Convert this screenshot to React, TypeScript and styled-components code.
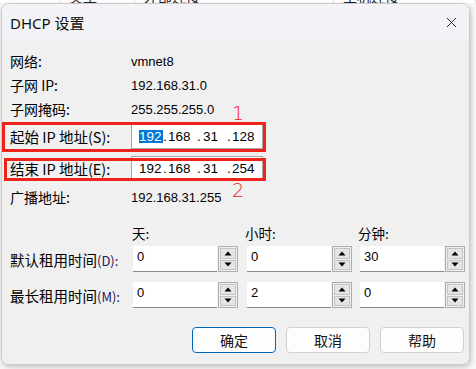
import React from 'react';
import styled, { createGlobalStyle } from 'styled-components';
import { X } from 'lucide-react';

const RED = '#f0231c';

const GlobalStyle = createGlobalStyle`
  html, body {
    margin: 0;
    padding: 0;
  }
  body {
    width: 476px;
    height: 369px;
    overflow: hidden;
    background: #f7f7f7;
    color: #000;
    font-family: 'Noto Sans CJK SC', 'Noto Sans', sans-serif;
  }
`;

// ip segments: text, cell width, selected
const startIp = [
  { t: '192', w: 24, sel: true },
  { t: '.', w: 5 },
  { t: '168', w: 29 },
  { t: '.', w: 6 },
  { t: '31', w: 24 },
  { t: '.', w: 5 },
  { t: '128', w: 26 },
];
const endIp = [
  { t: '192', w: 24 },
  { t: '.', w: 5 },
  { t: '168', w: 29 },
  { t: '.', w: 6 },
  { t: '31', w: 24 },
  { t: '.', w: 5 },
  { t: '254', w: 26 },
];

type Seg = { t: string; w: number; sel?: boolean };

function IpField({ segs }: { segs: Seg[] }) {
  return (
    <IpBox>
      {segs.map((s, i) => (
        <IpCell key={i} $w={s.w}>
          {s.sel ? <Selected>{s.t}</Selected> : s.t}
        </IpCell>
      ))}
    </IpBox>
  );
}

function Spin({ value }: { value: string }) {
  return (
    <SpinBox>
      <SpinField>{value}</SpinField>
      <SpinButtons>
        <SpinButton>
          <svg width="8" height="5" viewBox="0 0 8 5">
            <path d="M4 0.5 L7.5 4.5 L0.5 4.5 Z" fill="#000" />
          </svg>
        </SpinButton>
        <SpinButton>
          <svg width="8" height="5" viewBox="0 0 8 5">
            <path d="M0.5 0.5 L7.5 0.5 L4 4.5 Z" fill="#000" />
          </svg>
        </SpinButton>
      </SpinButtons>
    </SpinBox>
  );
}

function App() {
  return (
    <Page>
      <GlobalStyle />
      {/* the window behind the dialog, only its bottom edge shows */}
      <BehindStrip>
        <BehindCell $w={60} />
        <BehindCell $w={75}>类型</BehindCell>
        <BehindCell $w={199}>外部连接</BehindCell>
        <BehindCell $w={142}>主机连接</BehindCell>
      </BehindStrip>

      <Dialog>
        <TitleBar>
          <Title>DHCP 设置</Title>
          <X size={17} strokeWidth={1.3} color="#1a1a1a" />
        </TitleBar>

        <Body>
          <InfoRow $mt={0}>
            <span>网络:</span>
            <span>vmnet8</span>
          </InfoRow>
          <InfoRow $mt={0}>
            <span>子网 IP:</span>
            <span>192.168.31.0</span>
          </InfoRow>
          <InfoRow $mt={0}>
            <span>子网掩码:</span>
            <span>255.255.255.0</span>
          </InfoRow>

          <IpRow $mt={3} $h={25}>
            <BigLabel>起始 IP 地址(S):</BigLabel>
            <IpField segs={startIp} />
          </IpRow>
          <IpRow $mt={7} $h={24}>
            <BigLabel>结束 IP 地址(E):</BigLabel>
            <IpField segs={endIp} />
          </IpRow>

          <InfoRow $mt={5}>
            <span>广播地址:</span>
            <span>192.168.31.255</span>
          </InfoRow>

          <SpinHeader>
            <span />
            <span>天:</span>
            <span>小时:</span>
            <span>分钟:</span>
          </SpinHeader>

          <SpinRow $mt={2}>
            <BigLabel>
              默认租用时间<Mnemonic>(D):</Mnemonic>
            </BigLabel>
            <Spin value="0" />
            <Spin value="0" />
            <Spin value="30" />
          </SpinRow>
          <SpinRow $mt={10}>
            <BigLabel>
              最长租用时间<Mnemonic>(M):</Mnemonic>
            </BigLabel>
            <Spin value="0" />
            <Spin value="2" />
            <Spin value="0" />
          </SpinRow>

          <ButtonRow>
            <DialogButton $primary>确定</DialogButton>
            <DialogButton>取消</DialogButton>
            <DialogButton>帮助</DialogButton>
          </ButtonRow>
        </Body>
      </Dialog>

      {/* red annotations drawn over the screenshot */}
      <Mark style={{ top: 122, left: 2, width: 264, height: 30 }} />
      <Mark style={{ top: 158, left: 4, width: 262, height: 23 }} />
      <MarkNumber style={{ top: 101, left: 232 }}>1</MarkNumber>
      <MarkNumber style={{ top: 178, left: 232 }}>2</MarkNumber>
    </Page>
  );
}

const Page = styled.div`
  position: relative;
  width: 476px;
  height: 369px;
  display: flex;
  flex-direction: column;
`;
const BehindStrip = styled.div`
  height: 3px;
  background: #fff;
  display: flex;
  overflow: hidden;
`;
const BehindCell = styled.div<{ $w: number }>`
  width: ${(p) => p.$w}px;
  flex: 0 0 auto;
  box-sizing: border-box;
  border-right: 1px solid #e2e2e2;
  padding-left: 9px;
  font-size: 14px;
  line-height: 14px;
  margin-top: -11px;
  color: #222;
`;
const Dialog = styled.div`
  margin-left: 1px;
  width: 469px;
  height: 362px;
  box-sizing: border-box;
  border: 1px solid #c9c9c9;
  border-radius: 8px;
  overflow: hidden;
  display: flex;
  flex-direction: column;
  box-shadow: 1px 2px 5px rgba(0, 0, 0, 0.22);
`;
const TitleBar = styled.div`
  height: 36px;
  flex: 0 0 auto;
  background: #f3f2f6;
  display: flex;
  align-items: center;
  justify-content: space-between;
  padding: 0 9px 0 8px;
`;
const Title = styled.div`
  font-family: 'Noto Sans', 'Noto Sans CJK SC', sans-serif;
  font-size: 15px;
  color: #111;
`;
const Body = styled.div`
  flex: 1;
  background: #f0f0f0;
  padding: 9px 5px 0 8px;
  display: flex;
  flex-direction: column;
  font-size: 13px;
`;
const InfoRow = styled.div<{ $mt: number }>`
  margin-top: ${(p) => p.$mt}px;
  height: 24px;
  display: grid;
  grid-template-columns: 121px 1fr;
  align-items: center;
  font-size: 14px;
  & > span:last-child {
    font-family: 'Liberation Sans', 'Noto Sans', sans-serif;
    font-size: 13px;
  }
`;
const IpRow = styled.div<{ $mt: number; $h: number }>`
  margin-top: ${(p) => p.$mt}px;
  height: ${(p) => p.$h}px;
  display: grid;
  grid-template-columns: 121px 132px;
  align-items: center;
`;
const BigLabel = styled.span`
  font-size: 14.5px;
  white-space: nowrap;
`;
const Mnemonic = styled.span`
  font-size: 13px;
  color: #1e2050;
`;
const IpBox = styled.div`
  height: 100%;
  box-sizing: border-box;
  background: #fff;
  border: 1px solid #a6a6a6;
  padding-left: 7px;
  display: flex;
  align-items: center;
  font-family: 'Liberation Sans', 'Noto Sans', sans-serif;
  font-size: 13.5px;
`;
const IpCell = styled.span<{ $w: number }>`
  flex: 0 0 ${(p) => p.$w}px;
  white-space: nowrap;
`;
const Selected = styled.span`
  display: inline-block;
  background: #0078d7;
  color: #fff;
  line-height: 13px;
  padding-right: 1px;
`;
const SpinHeader = styled.div`
  margin-top: 13px;
  height: 22px;
  display: grid;
  grid-template-columns: 122px 113px 113px 1fr;
  align-items: center;
  font-size: 13.5px;
`;
const SpinRow = styled.div<{ $mt: number }>`
  margin-top: ${(p) => p.$mt}px;
  height: 26px;
  display: grid;
  grid-template-columns: 123px 114px 113px 1fr;
  align-items: center;
`;
const SpinBox = styled.div`
  display: flex;
  height: 26px;
  width: 105px;
`;
const SpinField = styled.div`
  width: 84px;
  box-sizing: border-box;
  background: #fff;
  border-bottom: 1px solid #8a8a8a;
  padding: 3px 0 0 4px;
  font-family: 'Liberation Sans', 'Noto Sans', sans-serif;
  font-size: 13px;
`;
const SpinButtons = styled.div`
  margin-left: 1px;
  width: 20px;
  box-sizing: border-box;
  border: 1px solid #adadad;
  padding: 1px;
  display: flex;
  flex-direction: column;
  gap: 1px;
  background: #f0f0f0;
`;
const SpinButton = styled.div`
  flex: 1;
  background: #e5e5e5;
  border: 1px solid #c4c4c4;
  display: flex;
  align-items: center;
  justify-content: center;
`;
const ButtonRow = styled.div`
  margin-top: 19px;
  display: flex;
  justify-content: flex-end;
  gap: 10px;
`;
const DialogButton = styled.div<{ $primary?: boolean }>`
  width: 84px;
  height: 26px;
  box-sizing: border-box;
  border: ${(p) => (p.$primary ? '1.5px solid #0067c0' : '1px solid #d0d0d0')};
  border-radius: 4px;
  background: #fdfdfd;
  display: flex;
  align-items: center;
  justify-content: center;
  font-size: 14px;
  color: #111;
`;
const Mark = styled.div`
  position: absolute;
  box-sizing: border-box;
  border: 3px solid ${RED};
  pointer-events: none;
`;
const MarkNumber = styled.div`
  position: absolute;
  color: ${RED};
  font-family: 'DejaVu Sans', sans-serif;
  font-weight: 200;
  font-size: 19px;
  line-height: 24px;
`;

export default App;
